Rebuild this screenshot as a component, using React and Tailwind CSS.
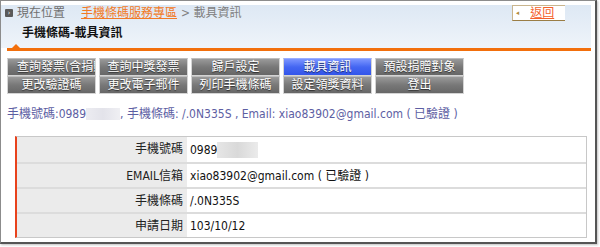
import React from "react";

const tabs = [
  ["查詢發票(含捐贈)", "更改驗證碼"],
  ["查詢中獎發票", "更改電子郵件"],
  ["歸戶設定", "列印手機條碼"],
  ["載具資訊", "設定領獎資料"],
  ["預設捐贈對象", "登出"],
];

const rows = [
  { label: "手機號碼", value: "0989", masked: true },
  { label: "EMAIL信箱", value: "xiao83902@gmail.com ( 已驗證 )" },
  { label: "手機條碼", value: "/.0N335S" },
  { label: "申請日期", value: "103/10/12" },
];

function TabButton({ text, active, clip }) {
  return (
    <div
      className={`h-[18px] overflow-hidden whitespace-nowrap text-[12px] leading-[16px] text-white border border-[#d4d4d4] [text-shadow:0_1px_1px_rgba(0,0,0,0.6)] ${
        clip ? "text-left pl-[9px]" : "text-center"
      } ${
        active
          ? "bg-gradient-to-b from-[#7d95ff] via-[#4466f2] to-[#3355ea] border-t-[#9aaeff]"
          : "bg-gradient-to-b from-[#9a9a9a] via-[#787878] to-[#676767] border-t-[#bdbdbd]"
      }`}
    >
      {text}
    </div>
  );
}

export default function App() {
  return (
    <div className="w-[600px] h-[247px] bg-white font-['DejaVu_Sans_Condensed','Liberation_Sans','Noto_Sans_CJK_TC',sans-serif] text-[12px]">
      <div className="w-[597px] h-[244px] border-l border-t border-[#8c8c8c] border-r-2 border-b-2 border-r-[#555] border-b-[#555] shadow-[1px_1px_2px_rgba(0,0,0,0.25)]">
        {/* Header */}
        <div className="w-[590px] h-[43px] bg-gradient-to-b from-[#dde8f4] to-[#eff4fa]">
          <div className="flex items-center justify-between h-[16px] mt-[4px] pl-[4px] pr-[26px]">
            <div className="flex items-center">
              <span className="w-[8px] h-[8px] rounded-[1px] bg-[#5a5a5a] text-white text-[7px] leading-[8px] flex items-center justify-center">›</span>
              <span className="ml-[4px] text-[#707070] leading-[16px]">現在位置</span>
              <span className="ml-[16px] text-[#f27a26] underline leading-[16px]">手機條碼服務專區</span>
              <span className="ml-[4px] text-[#808080] leading-[16px]">&gt; 載具資訊</span>
            </div>
            <div className="w-[53px] h-[16px] bg-white border-l border-b border-t border-[#c9b58e] border-b-[#9a7d45] flex items-center">
              <span className="ml-[3px] text-[7px] leading-none text-[#b08a3a]">◂</span>
              <span className="ml-[11px] text-[#f4622c] underline leading-[14px]">返回</span>
            </div>
          </div>
          <div className="mt-[4px] pl-[21px] h-[16px] leading-[16px] font-bold text-[#111]">手機條碼-載具資訊</div>
        </div>
        <div className="relative ml-[6px] w-[584px] h-[3px] bg-[#f26f0c]">
          <div className="absolute left-[5px] bottom-[3px] w-0 h-0 border-l-[4px] border-r-[4px] border-b-[4px] border-l-transparent border-r-transparent border-b-[#f26f0c]" />
        </div>

        {/* Tabs */}
        <div className="mt-[7px] ml-[6px] flex gap-[3px]">
          {tabs.map((col, i) => (
            <div key={i} className="w-[89px] flex flex-col">
              <TabButton text={col[0]} active={i === 3} clip={i === 0} />
              <TabButton text={col[1]} />
            </div>
          ))}
        </div>

        {/* Info line */}
        <div className="mt-[12px] ml-[6px] h-[16px] leading-[16px] text-[#5d5ea3] flex items-center whitespace-nowrap">
          <span>手機號碼:0989</span>
          <span className="w-[34px] h-[12px] bg-gradient-to-r from-[#ececf1] via-[#e3e3ea] to-[#efeff3]" />
          <span>, 手機條碼: /.0N335S , Email: xiao83902@gmail.com ( 已驗證 )</span>
        </div>

        {/* Table */}
        <div className="mt-[14px] ml-[14px] w-[572px] border-t border-r border-b border-[#c8c8c8] border-l-2 border-l-[#e8421c]">
          {rows.map((r, i) => (
            <div key={i} className={`flex h-[25px] ${i > 0 ? "border-t-2 border-[#dcdcdc]" : ""}`}>
              <div className="w-[170px] bg-[#ebebeb] text-right pr-[4px] leading-[24px] text-[#222]">{r.label}</div>
              <div className="flex-1 pl-[3px] leading-[24px] text-[#111] flex items-center">
                <span>{r.value}</span>
                {r.masked && <span className="w-[41px] h-[16px] bg-gradient-to-r from-[#e6e6e6] via-[#d9d9d9] to-[#ebebeb]" />}
              </div>
            </div>
          ))}
        </div>
      </div>
    </div>
  );
}
